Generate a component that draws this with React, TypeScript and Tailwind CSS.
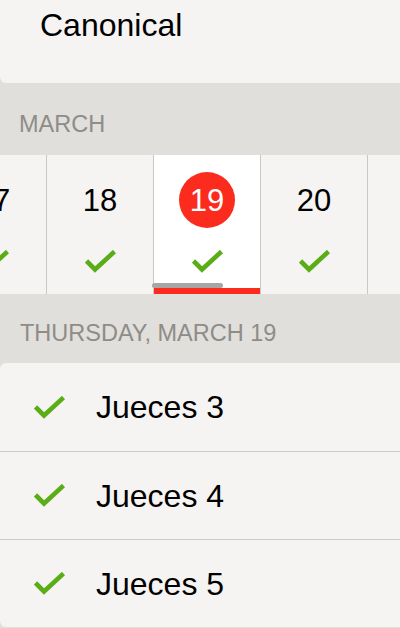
import React from "react";

const Check = () => (
  <svg width="31" height="23" viewBox="0 0 31 23" className="block">
    <polyline points="1.5,11 10,19.5 29.5,1.5" fill="none" stroke="#5aad17" strokeWidth="4.6" strokeLinejoin="miter" />
  </svg>
);

const days = [17, 18, 19, 20];

export default function App() {
  return (
    <div className="w-[400px] h-[628px] overflow-hidden bg-[#e0dfdc] flex flex-col" style={{ fontFamily: '"Liberation Sans", Arial, sans-serif' }}>
      <div className="h-[83px] shrink-0 bg-[#f5f4f2] rounded-bl-[6px] pl-[40px] pt-[9px]">
        <div className="text-[32px] leading-none text-black">Canonical</div>
      </div>
      <div className="h-[72px] shrink-0 pl-[19px] pt-[30px]">
        <div className="text-[23.5px] leading-none text-[#8f8c88]">MARCH</div>
      </div>
      <div className="relative h-[139px] shrink-0 flex overflow-hidden bg-[#f5f4f2]">
        {days.map((d, i) => {
          const sel = d === 19;
          return (
            <div
              key={d}
              className={
                "w-[107px] shrink-0 border-l border-[#cac8c5] flex flex-col items-center " +
                (i === 0 ? "ml-[-61px] " : "") +
                (sel ? "bg-white" : "bg-[#f5f4f2]")
              }
            >
              <div className="h-[56px] mt-[17px] flex items-center justify-center">
                {sel ? (
                  <div className="w-[56px] h-[56px] rounded-full bg-[#fb2b1e] flex items-center justify-center">
                    <span className="text-[31px] leading-none text-white">{d}</span>
                  </div>
                ) : (
                  <span className="text-[31px] leading-none text-black">{d}</span>
                )}
              </div>
              <div className="mt-[22px]">
                <Check />
              </div>
              <div className={"mt-auto h-[6px] w-full " + (sel ? "bg-[#fb2b1e]" : "")} />
            </div>
          );
        })}
        <div className="w-[107px] shrink-0 border-l border-[#cac8c5]" />
        <div className="absolute left-[152px] top-[128px] w-[71px] h-[5px] rounded-full bg-[#a6a6a6]" />
      </div>
      <div className="h-[69px] shrink-0 pl-[20px] pt-[28px]">
        <div className="text-[23.5px] leading-none text-[#8f8c88]">THURSDAY, MARCH 19</div>
      </div>
      <div className="shrink-0 bg-[#f5f4f2] rounded-l-[6px] flex flex-col">
        {[3, 4, 5].map((n, i) => (
          <div
            key={n}
            className={"h-[88px] flex items-center " + (i > 0 ? "border-t border-[#cfcdca]" : "")}
          >
            <div className="w-[96px] pl-[34px] shrink-0">
              <Check />
            </div>
            <span className="text-[32px] leading-none text-black">Jueces {n}</span>
          </div>
        ))}
      </div>
    </div>
  );
}
